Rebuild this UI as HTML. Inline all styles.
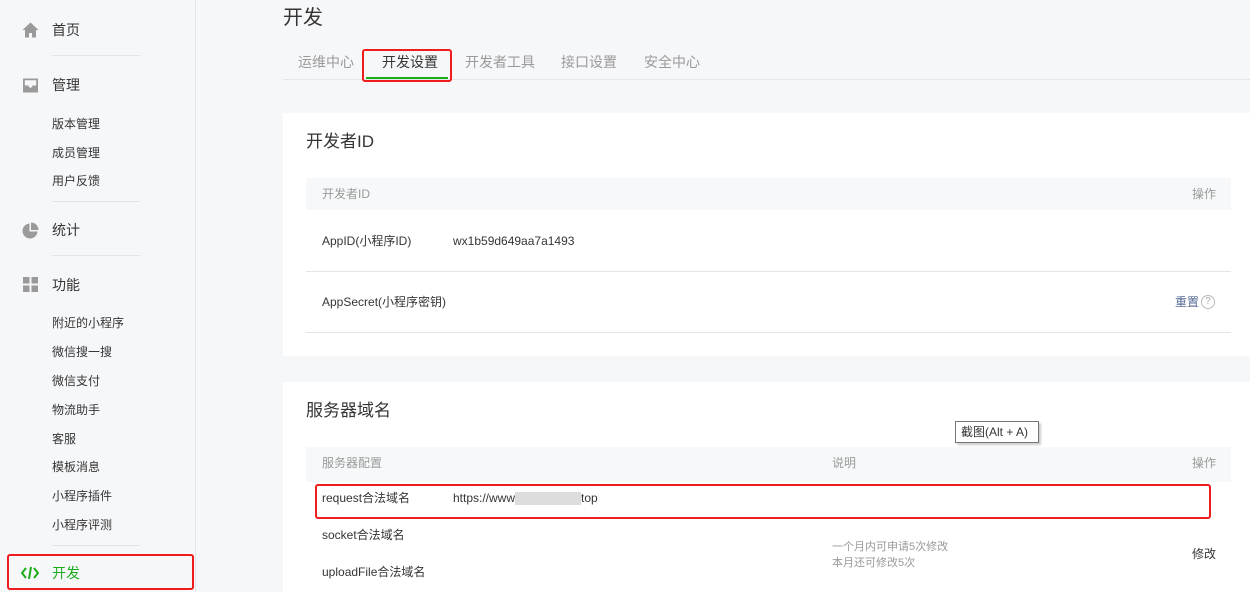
<!DOCTYPE html><html><head><meta charset="utf-8"><style>
*{margin:0;padding:0;box-sizing:border-box}
body{width:1250px;height:592px;overflow:hidden;background:#f6f7f9;font-family:"Liberation Sans","Noto Sans CJK SC",sans-serif;position:relative;color:#353535;line-height:1.2}
.a{position:absolute}
.side{left:0;top:0;width:196px;height:592px;border-right:1px solid #e4e6e9;background:#f6f7f9}
.m{font-size:14px;color:#353535}
.s{font-size:12px;color:#353535;left:52px}
.hr{left:52px;width:88px;height:1px;background:#e2e4e7}
.card{background:#fff;left:283px;width:967px}
.th{background:#f6f8f9;left:306px;width:925px;font-size:12px;color:#9a9a9a}
.row{font-size:12px;color:#353535}
.line{left:306px;width:925px;height:1px;background:#e5e5e5}
.red{border:2px solid #ee1c1c;border-radius:3px}
</style></head><body>
<div class="a side"></div>
<svg class="a" style="left:22px;top:22px" width="17" height="16" viewBox="0 0 17 16"><path d="M8.5 0.5L0.5 8H3v7.5h4v-4.5h3v4.5h4V8h2.5z" fill="#9a9a9a"/></svg>
<div class="a m" style="left:52px;top:22px">首页</div>
<div class="a hr" style="top:55px"></div>
<svg class="a" style="left:22px;top:77px" width="17" height="16" viewBox="0 0 17 16"><path d="M1 1.5h15v14H1z M2.8 8.5h3.7c0 1.3 .9 2.2 2 2.2s2-.9 2-2.2h3.7V3.3H2.8z" fill="#9a9a9a" fill-rule="evenodd"/></svg>
<div class="a m" style="left:52px;top:77px">管理</div>
<div class="a s" style="top:117px">版本管理</div>
<div class="a s" style="top:146px">成员管理</div>
<div class="a s" style="top:174px">用户反馈</div>
<div class="a hr" style="top:201px"></div>
<svg class="a" style="left:22px;top:222px" width="17" height="17" viewBox="0 0 17 17"><path d="M7.5 1.5A7.5 7.5 0 1 0 15.5 9.5H7.5z" fill="#9a9a9a"/><path d="M9 0.5V8h7.5A7.5 7.5 0 0 0 9 0.5z" fill="#9a9a9a"/></svg>
<div class="a m" style="left:52px;top:222px">统计</div>
<div class="a hr" style="top:255px"></div>
<svg class="a" style="left:23px;top:277px" width="16" height="16" viewBox="0 0 16 16"><g fill="#9a9a9a"><rect width="6.5" height="6.5"/><rect x="8.5" width="6.5" height="6.5"/><rect y="8.5" width="6.5" height="6.5"/><rect x="8.5" y="8.5" width="6.5" height="6.5"/></g></svg>
<div class="a m" style="left:52px;top:277px">功能</div>
<div class="a s" style="top:316px">附近的小程序</div>
<div class="a s" style="top:345px">微信搜一搜</div>
<div class="a s" style="top:374px">微信支付</div>
<div class="a s" style="top:403px">物流助手</div>
<div class="a s" style="top:432px">客服</div>
<div class="a s" style="top:460px">模板消息</div>
<div class="a s" style="top:489px">小程序插件</div>
<div class="a s" style="top:518px">小程序评测</div>
<div class="a hr" style="top:545px"></div>
<div class="a red" style="left:7px;top:554px;width:187px;height:36px"></div>
<svg class="a" style="left:21px;top:566px" width="18" height="14" viewBox="0 0 18 14"><path d="M5 2L1 7l4 5M13 2l4 5-4 5M10 1L8 13" stroke="#1aad19" stroke-width="2" fill="none"/></svg>
<div class="a m" style="left:52px;top:565px;color:#1aad19">开发</div>

<div class="a" style="left:283px;top:6px;font-size:20px;color:#353535">开发</div>
<div class="a" style="left:283px;top:79px;width:967px;height:1px;background:#e4e6e9"></div>
<div class="a" style="left:298px;top:54px;font-size:14px;color:#9a9a9a">运维中心</div>
<div class="a" style="left:382px;top:54px;font-size:14px;color:#353535">开发设置</div>
<div class="a" style="left:366px;top:77px;width:82px;height:2px;background:#1aad19"></div>
<div class="a red" style="left:362px;top:49px;width:90px;height:33px"></div>
<div class="a" style="left:465px;top:54px;font-size:14px;color:#9a9a9a">开发者工具</div>
<div class="a" style="left:561px;top:54px;font-size:14px;color:#9a9a9a">接口设置</div>
<div class="a" style="left:644px;top:54px;font-size:14px;color:#9a9a9a">安全中心</div>

<div class="a card" style="top:113px;height:243px"></div>
<div class="a" style="left:306px;top:132px;font-size:17px">开发者ID</div>
<div class="a th" style="top:178px;height:32px"></div>
<div class="a" style="left:322px;top:187px;font-size:12px;color:#9a9a9a">开发者ID</div>
<div class="a" style="left:1192px;top:187px;font-size:12px;color:#9a9a9a">操作</div>
<div class="a row" style="left:322px;top:234px">AppID(小程序ID)</div>
<div class="a row" style="left:453px;top:234px">wx1b59d649aa7a1493</div>
<div class="a line" style="top:271px"></div>
<div class="a row" style="left:322px;top:295px">AppSecret(小程序密钥)</div>
<div class="a row" style="left:1175px;top:295px;color:#576b95">重置</div>
<div class="a" style="left:1201px;top:295px;width:14px;height:14px;border:1px solid #bbb;border-radius:50%;font-size:10px;color:#aaa;text-align:center;line-height:12px">?</div>
<div class="a line" style="top:332px"></div>

<div class="a card" style="top:382px;height:210px"></div>
<div class="a" style="left:306px;top:401px;font-size:17px">服务器域名</div>
<div class="a th" style="top:447px;height:35px"></div>
<div class="a" style="left:322px;top:456px;font-size:12px;color:#9a9a9a">服务器配置</div>
<div class="a" style="left:832px;top:456px;font-size:12px;color:#9a9a9a">说明</div>
<div class="a" style="left:1192px;top:456px;font-size:12px;color:#9a9a9a">操作</div>
<div class="a" style="left:955px;top:421px;width:84px;height:22px;background:#fff;border:1px solid #767676;box-shadow:2px 2px 2px #ccc;font-size:12px;line-height:20px;padding-left:5px">截图(Alt + A)</div>
<div class="a red" style="left:315px;top:484px;width:896px;height:35px"></div>
<div class="a row" style="left:322px;top:491px">request合法域名</div>
<div class="a row" style="left:453px;top:491px">https://www<span style="display:inline-block;width:66px;height:13px;background:#ddd;vertical-align:middle"></span>top</div>
<div class="a row" style="left:322px;top:528px">socket合法域名</div>
<div class="a row" style="left:322px;top:565px">uploadFile合法域名</div>
<div class="a" style="left:832px;top:539px;font-size:11px;color:#9a9a9a;line-height:16px">一个月内可申请5次修改<br>本月还可修改5次</div>
<div class="a row" style="left:1192px;top:547px">修改</div>
</body></html>
